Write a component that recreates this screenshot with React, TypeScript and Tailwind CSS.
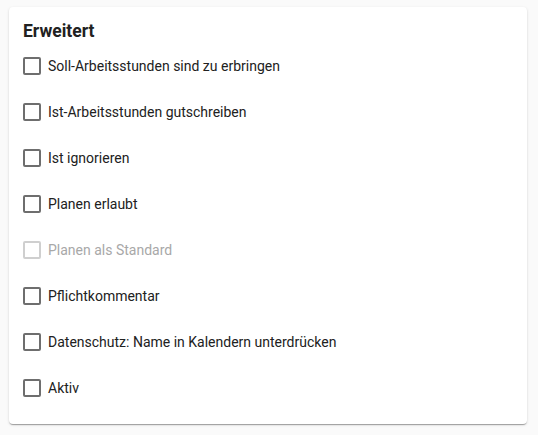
import React from "react";

const options = [
  { label: "Soll-Arbeitsstunden sind zu erbringen" },
  { label: "Ist-Arbeitsstunden gutschreiben" },
  { label: "Ist ignorieren" },
  { label: "Planen erlaubt" },
  { label: "Planen als Standard", disabled: true },
  { label: "Pflichtkommentar" },
  { label: "Datenschutz: Name in Kalendern unterdrücken" },
  { label: "Aktiv" },
];

export default function App() {
  return (
    <div className="min-h-[435px] bg-[#fafafa] pt-[7px] pl-[9px] pr-[11px] pb-[12px]" style={{ fontFamily: "Roboto, 'Liberation Sans', sans-serif" }}>
      <div className="bg-white rounded-[4px] shadow-[0_2px_1px_-1px_rgba(0,0,0,0.2),0_1px_1px_0_rgba(0,0,0,0.14),0_1px_3px_0_rgba(0,0,0,0.12)] px-[14px] pt-[12px] pb-[13px]">
        <h2 className="text-[17.5px] leading-[24px] font-bold text-[#212121]">Erweitert</h2>
        <div className="flex flex-col">
          {options.map((o, i) => (
            <label key={i} className="flex items-center h-[46px] gap-[7px]">
              <span
                className={
                  "w-[18px] h-[18px] rounded-[2px] border-2 " +
                  (o.disabled ? "border-[#cfcfcf]" : "border-[#6e6e6e]")
                }
              />
              <span className={"text-[14px] " + (o.disabled ? "text-[#a8a8a8]" : "text-[#212121]")}>
                {o.label}
              </span>
            </label>
          ))}
        </div>
      </div>
    </div>
  );
}
